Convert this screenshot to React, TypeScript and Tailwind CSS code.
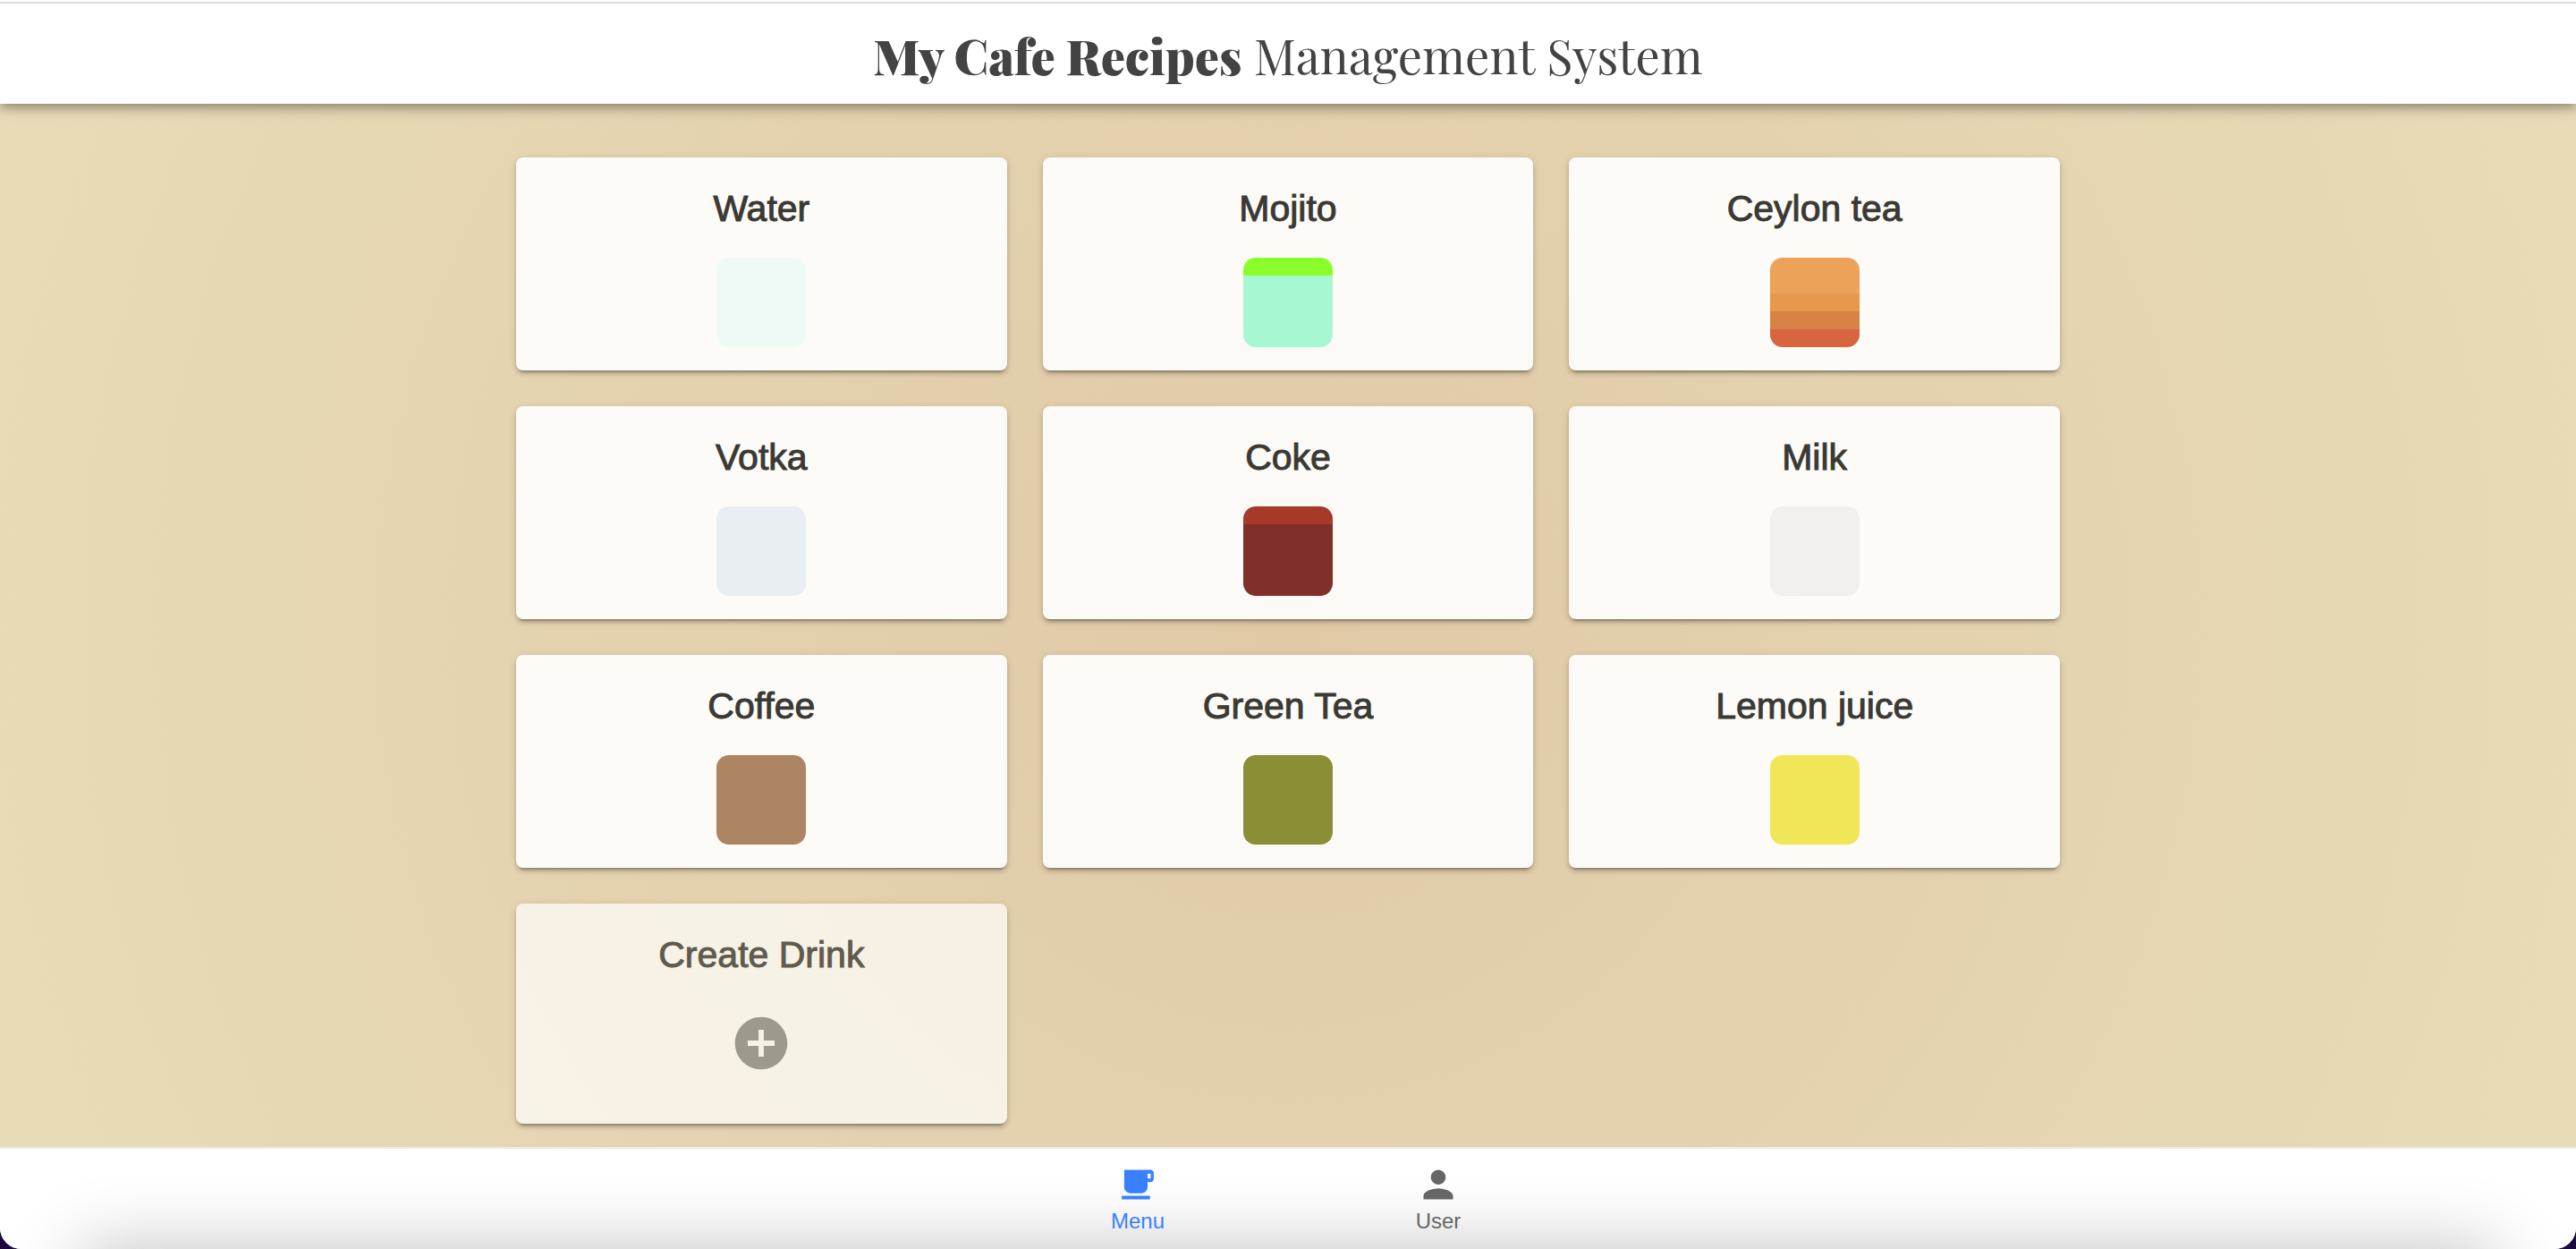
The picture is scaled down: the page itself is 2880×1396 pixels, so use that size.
import { IoMdAddCircle, IoMdCafe, IoMdPerson } from "react-icons/io";

type Drink = { title: string; layers: { color: string; parts: number }[] };

const drinks: Drink[] = [
  { title: "Water", layers: [{ color: "#eefaf6", parts: 1 }] },
  {
    title: "Mojito",
    layers: [
      { color: "#8afd2b", parts: 1 },
      { color: "#a7f8d2", parts: 4 },
    ],
  },
  {
    title: "Ceylon tea",
    layers: [
      { color: "#eca359", parts: 2 },
      { color: "#e6994d", parts: 1 },
      { color: "#d88246", parts: 1 },
      { color: "#d66540", parts: 1 },
    ],
  },
  { title: "Votka", layers: [{ color: "#e8eef1", parts: 1 }] },
  {
    title: "Coke",
    layers: [
      { color: "#a63927", parts: 1 },
      { color: "#803028", parts: 4 },
    ],
  },
  { title: "Milk", layers: [{ color: "#f1f0ec", parts: 1 }] },
  { title: "Coffee", layers: [{ color: "#ad8562", parts: 1 }] },
  { title: "Green Tea", layers: [{ color: "#8a8f36", parts: 1 }] },
  { title: "Lemon juice", layers: [{ color: "#efe757", parts: 1 }] },
];

const cardShadow =
  "shadow-[0_6px_2px_-4px_rgba(0,0,0,0.2),0_4px_4px_rgba(0,0,0,0.14),0_2px_10px_rgba(0,0,0,0.12)]";

function DrinkCard({ drink }: { drink: Drink }) {
  return (
    <button
      type="button"
      className={`flex flex-col items-center rounded-lg bg-[#fefefd]/92 px-8 pt-8 pb-[26px] ${cardShadow}`}
    >
      <span className="text-[41px] leading-[50px] text-[#3a3934] [-webkit-text-stroke:1px_#3a3934]">
        {drink.title}
      </span>
      <span className="mt-[30px] flex size-[100px] flex-col overflow-hidden rounded-[14px]">
        {drink.layers.map((layer) => (
          <span
            key={layer.color}
            style={{ flexGrow: layer.parts, backgroundColor: layer.color }}
          />
        ))}
      </span>
    </button>
  );
}

export default function App() {
  return (
    <div className="min-h-screen bg-[#1c0a3c] font-['Liberation_Sans',Arial,sans-serif]">
      <div className="flex min-h-screen flex-col overflow-hidden rounded-b-3xl bg-white">
        <header className="relative z-10 bg-white pt-0.5 text-center shadow-[0_4px_8px_-2px_rgba(0,0,0,0.2),0_8px_10px_rgba(0,0,0,0.14),0_2px_20px_rgba(0,0,0,0.12)]">
          <div className="border-t-2 border-[#dddddd] pt-[22px] pb-[18px]">
            <h1 className="font-['Playfair_Display','Liberation_Serif',serif] text-[54px] leading-[72px] text-[#434343]">
              <strong className="font-black">My Cafe Recipes</strong> Management System
            </h1>
          </div>
        </header>

        <main className="flex-1 bg-[radial-gradient(circle_at_50%_50%,#e1c9a6_0%,#e8dcb8_100%)] pt-15 pb-[26px]">
          <div className="mx-auto grid w-3/5 grid-cols-3 gap-10 px-px">
            {drinks.map((drink) => (
              <DrinkCard key={drink.title} drink={drink} />
            ))}
            <button
              type="button"
              className={`flex flex-col items-center rounded-lg bg-[#fefcf8]/75 px-8 pt-8 pb-[54px] ${cardShadow}`}
            >
              <span className="text-[41px] leading-[50px] text-[#5f5b4e] [-webkit-text-stroke:1px_#5f5b4e]">
                Create Drink
              </span>
              <IoMdAddCircle className="mt-[38px] size-[72px] text-[#9d998c]" />
            </button>
          </div>
        </main>

        <nav className="relative flex justify-center overflow-hidden border-t-2 border-[#ebebeb] bg-white">
          <div className="pointer-events-none absolute inset-x-[90px] top-full h-20 shadow-[0_0_80px_rgba(0,0,0,0.25)]" />
          <a href="#menu" className="relative flex h-28 w-[336px] flex-col items-center pt-[18px] text-[#3880ff]">
            <IoMdCafe className="size-11" />
            <span className="mt-1 text-2xl leading-[30px]">Menu</span>
          </a>
          <a href="#user" className="relative flex h-28 w-[336px] flex-col items-center pt-[18px] text-[#666666]">
            <IoMdPerson className="size-11" />
            <span className="mt-1 text-2xl leading-[30px]">User</span>
          </a>
        </nav>
      </div>
    </div>
  );
}
